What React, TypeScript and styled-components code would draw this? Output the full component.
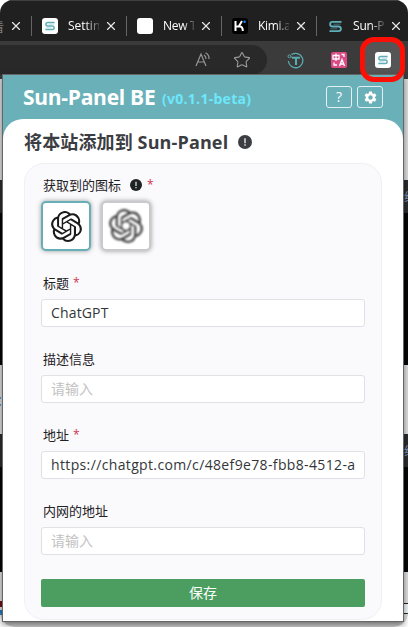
import React from "react";
import styled, { createGlobalStyle } from "styled-components";
import { Star, X } from "lucide-react";
import { MdSettings } from "react-icons/md";
import { SiOpenai } from "react-icons/si";

const Global = createGlobalStyle`
  *, *::before, *::after { box-sizing: border-box; }
  body { margin: 0; background: #fff; overflow: hidden; }
  button, input { font: inherit; margin: 0; }
`;

const cjk = `"Noto Sans CJK SC", sans-serif`;

const Browser = styled.div`
  position: relative;
  width: 408px;
  height: 627px;
  overflow: hidden;
  background: #fff;
  font-family: "Open Sans", ${cjk};
`;

const Frame = styled.div`
  display: flex;
  flex-direction: column;
  height: 627px;
  border-radius: 13px 13px 15px 15px;
  overflow: hidden;
  background: #cfcfcf;
`;

const TabBar = styled.div`
  display: flex;
  flex: none;
  height: 41px;
  padding-top: 9px;
  background: #202020;
  border-top: 1px solid #3c4043;
`;

const Tab = styled.div<{ $width: number }>`
  display: flex;
  align-items: center;
  flex: none;
  width: ${(p) => p.$width}px;
  height: 32px;
  color: #fff;
`;

const Favicon = styled.span<{ $bg?: string }>`
  display: flex;
  align-items: center;
  justify-content: center;
  flex: none;
  width: 16px;
  height: 16px;
  margin-left: 10px;
  border-radius: 3px;
  background: ${(p) => p.$bg ?? "transparent"};
`;

const TabTitle = styled.span<{ $fade?: number; $spacing?: number }>`
  flex: none;
  width: 31px;
  margin-left: 10px;
  white-space: nowrap;
  font-size: 12px;
  line-height: 18px;
  letter-spacing: ${(p) => p.$spacing ?? 0}px;
  mask-image: linear-gradient(to right, #000 ${(p) => p.$fade ?? 55}%, rgba(0, 0, 0, 0.2));
`;

const CloseIcon = styled(X).attrs({ size: 14, strokeWidth: 2 })`
  flex: none;
  margin-left: 5px;
  color: #e8e8e8;
`;

const Divider = styled.span`
  flex: none;
  width: 1px;
  height: 20px;
  margin-left: auto;
  background: #666;
`;

const PartialTitle = styled.span`
  display: flex;
  justify-content: flex-end;
  flex: none;
  width: 4px;
  color: #808080;
  font: 12px ${cjk};
`;

const Toolbar = styled.div`
  display: flex;
  flex: none;
  height: 38px;
  padding-top: 4px;
  background: #3b3b3b;
`;

const AddressBar = styled.div`
  display: flex;
  align-items: center;
  justify-content: flex-end;
  gap: 21px;
  width: 267px;
  height: 30px;
  padding-right: 16px;
  border-radius: 0 15px 15px 0;
  background: #292929;
  color: #999;
`;

const Extensions = styled.div`
  display: flex;
  align-items: center;
  height: 30px;
  padding-left: 20px;
  gap: 27px;
`;

const Translate = styled.span`
  display: flex;
  width: 16px;
  height: 16px;
  border-radius: 2px;
  background: #dc4b86;
`;

const ActiveExtension = styled.span`
  display: flex;
  align-items: center;
  justify-content: center;
  width: 16px;
  height: 16px;
  margin-left: 1px;
  border-radius: 3px;
  background: #fff;
  box-shadow: 0 0 0 11px #555;
`;

const Strip = styled.div<{ $height: number; $color: string }>`
  flex: none;
  display: flex;
  justify-content: space-between;
  height: ${(p) => p.$height}px;
  background: ${(p) => p.$color};
`;

const StripText = styled.span`
  width: 4px;
  margin-left: auto;
  color: #8095b5;
  font: 12px/33px ${cjk};
`;

const LinkMarks = styled.span`
  width: 1px;
  height: 9px;
  margin-top: 32px;
  border: solid #4a9be8;
  border-width: 2px 0;
`;

const StripBox = styled.span`
  width: 20px;
  height: 11px;
  margin: 31px 0 0 auto;
  border: 1px solid #222;
  border-right: 0;
  background: #eef6f7;
`;

const EdgeMark = styled.span`
  width: 2px;
  height: 14px;
  margin-top: 29px;
  border-top: 6px solid #701019;
  border-bottom: 5px solid #2676b9;
`;

const Highlight = styled.div`
  position: absolute;
  left: 360px;
  top: 37px;
  width: 45px;
  height: 45px;
  border: 5px solid #fc1005;
  border-radius: 14px;
`;

const Popup = styled.main`
  position: absolute;
  left: 2px;
  top: 74px;
  width: 402px;
  height: 548px;
  border: 1px solid #666;
  background: #6ab0b8;
  box-shadow: 0 3px 6px rgba(0, 0, 0, 0.45);
`;

const Header = styled.header`
  display: flex;
  align-items: center;
  height: 44px;
  padding: 0 20px;
`;

const Brand = styled.h1`
  margin: 0;
  color: #fff;
  font-size: 21px;
  line-height: 30px;
  font-weight: 700;
  width: 139px;
  letter-spacing: -0.28px;
  white-space: nowrap;
`;

const Version = styled.span`
  padding-top: 4px;
  color: #6ee7fb;
  font-size: 14px;
  line-height: 18px;
  font-weight: 700;
  letter-spacing: 0.28px;
  white-space: nowrap;
`;

const Actions = styled.div`
  display: flex;
  gap: 5px;
  margin-left: auto;
`;

const HeaderButton = styled.button`
  display: flex;
  align-items: center;
  justify-content: center;
  width: 26px;
  height: 22px;
  padding: 0;
  border: 1px solid #e2f0f1;
  border-radius: 3px;
  background: transparent;
  color: #fff;
  font-size: 14px;
  line-height: 20px;
`;

const Body = styled.div`
  height: 502px;
  padding: 8px 21px 0;
  border-radius: 20px 20px 0 0;
  background: #fff;
`;

const PageTitle = styled.h2`
  display: flex;
  align-items: center;
  gap: 10px;
  height: 29px;
  margin: 0 0 7px;
  color: #3c3d42;
  font-size: 18px;
  line-height: 26px;
  font-weight: 700;
  white-space: nowrap;
`;

const TitleText = styled.span`
  letter-spacing: 0.13px;
`;

const Card = styled.section`
  height: 457px;
  padding: 10px 17px 0 16px;
  border: 1px solid #efeff5;
  border-radius: 20px;
  background: #fafafc;
`;

const Label = styled.div`
  display: flex;
  align-items: center;
  height: 22px;
  padding-left: 2px;
  color: #1f2225;
  font-size: 13px;
  line-height: 22px;
`;

const Required = styled.span`
  margin-left: 4px;
  color: #d03050;
  font-size: 12px;
`;

const NoteIcon = styled.span`
  display: flex;
  margin: 0 1px 0 9px;
`;

const IconChoices = styled.div`
  display: flex;
  gap: 10px;
  height: 50px;
  margin: 5px 0 21px;
`;

const IconChoice = styled.button<{ $selected?: boolean }>`
  display: flex;
  align-items: center;
  justify-content: center;
  width: 50px;
  height: 50px;
  padding: 0;
  border: 2px solid ${(p) => (p.$selected ? "#67afb7" : "#c9cacc")};
  border-radius: 5px;
  background: #fff;
  color: ${(p) => (p.$selected ? "#1b1b1b" : "#3f3f3f")};
  box-shadow: 0 0 5px rgba(0, 0, 0, 0.38);

  svg {
    filter: ${(p) => (p.$selected ? "none" : "blur(0.8px)")};
  }
`;

const Field = styled.label`
  display: block;
  height: 76px;
`;

const Input = styled.input<{ $spacing: number }>`
  display: block;
  width: 324px;
  height: 28px;
  margin-top: 5px;
  padding: 0 9px 2px;
  border: 1px solid #e0e0e6;
  border-radius: 3px;
  outline: none;
  background: #fff;
  color: #333639;
  font-family: "Open Sans", ${cjk};
  font-size: 14px;
  letter-spacing: ${(p) => p.$spacing}px;

  &::placeholder {
    color: #c2c2c2;
    opacity: 1;
  }
`;

const SaveButton = styled.button`
  display: block;
  width: 324px;
  height: 28px;
  margin-top: 3px;
  padding: 0 0 1px;
  border: 0;
  border-radius: 2px;
  background: #4b9e5f;
  color: #fff;
  font-size: 14px;
  line-height: 27px;
`;

function PanelLogo({ size = 12 }: { size?: number }) {
  return (
    <svg width={size} height={size} viewBox="0 0 14 14" fill="none" stroke="#60aeb8" strokeWidth="2">
      <path d="M13.5 2H4Q1.2 2 1.2 4.5T4 7H10Q12.8 7 12.8 9.5T10 12H.5" />
      <path d="M12.5 4.5H5M1.5 9.5H9" strokeWidth=".6" />
    </svg>
  );
}

function Notice({ size, color }: { size: number; color: string }) {
  return (
    <svg width={size} height={size} viewBox="0 0 14 14">
      <circle cx="7" cy="7" r="7" fill={color} />
      <path d="M7 3.2V8.2M7 9.3V10.8" stroke="#ddd" strokeWidth="1.5" />
    </svg>
  );
}

function ReadAloud() {
  return (
    <svg width="17" height="16" viewBox="0 0 17 16" fill="none" stroke="#969696" strokeWidth="1.2">
      <path d="M1 14L6 2L11 14M3 10H9" />
      <path d="M9 3Q11 4.5 11 7M10.5 .8Q14.5 3 14 7" />
    </svg>
  );
}

function TimeIcon() {
  return (
    <svg width="17" height="17" viewBox="0 0 17 17" fill="none" stroke="#5aabb0">
      <path d="M4.5 2.6A7.2 7.2 0 1 1 1.4 9" strokeWidth="1.3" />
      <path d="M5 5.8H13M9 5.5V13" strokeWidth="2.1" />
      <circle cx="2.4" cy="4.3" r="1.4" strokeWidth="1" />
      <path d="M3.8 4.5L6 6" />
    </svg>
  );
}

function TranslateIcon() {
  return (
    <svg width="16" height="16" viewBox="0 0 16 16" fill="none" stroke="#fff" strokeWidth="1.3">
      <path d="M2 3.5H8V7H2ZM5 1.5V9M8.5 14L11 7.5L13.5 14M9.5 12H12.5M10.5 2.5H13V5M3 10.5V13H6" />
    </svg>
  );
}

function KimiIcon() {
  return (
    <svg width="16" height="16" viewBox="0 0 16 16" fill="none" stroke="#fff" strokeWidth="2">
      <path d="M3.5 3V13M4 8.5H8Q10.8 8.5 10.8 13M10 3L7 8" />
      <circle cx="12.6" cy="3.7" r="1.2" fill="#1688ff" stroke="none" />
    </svg>
  );
}

type FieldProps = { label: string; required?: boolean; value?: string; spacing?: number };

function FormField({ label, required, value, spacing = 0 }: FieldProps) {
  return (
    <Field>
      <Label>
        {label}
        {required && <Required>*</Required>}
      </Label>
      <Input $spacing={spacing} defaultValue={value} placeholder="请输入" spellCheck={false} />
    </Field>
  );
}

export default function App() {
  return (
    <Browser>
      <Global />
      <Frame>
        <TabBar>
          <Tab $width={32}>
            <PartialTitle>看</PartialTitle>
            <CloseIcon />
            <Divider />
          </Tab>
          <Tab $width={95}>
            <Favicon $bg="#fff"><PanelLogo size={10} /></Favicon>
            <TabTitle>Settin</TabTitle>
            <CloseIcon />
            <Divider />
          </Tab>
          <Tab $width={95}>
            <Favicon $bg="#fff" />
            <TabTitle $fade={65} $spacing={-0.3}>New T</TabTitle>
            <CloseIcon />
            <Divider />
          </Tab>
          <Tab $width={95}>
            <Favicon $bg="#000"><KimiIcon /></Favicon>
            <TabTitle $spacing={-0.3}>Kimi.a</TabTitle>
            <CloseIcon />
            <Divider />
          </Tab>
          <Tab $width={91}>
            <Favicon><PanelLogo size={13} /></Favicon>
            <TabTitle $spacing={-0.2}>Sun-P</TabTitle>
            <CloseIcon />
          </Tab>
        </TabBar>
        <Toolbar>
          <AddressBar>
            <ReadAloud />
            <Star size={18} strokeWidth={1.5} />
          </AddressBar>
          <Extensions>
            <TimeIcon />
            <Translate><TranslateIcon /></Translate>
            <ActiveExtension><PanelLogo size={10} /></ActiveExtension>
          </Extensions>
        </Toolbar>
        <Strip $height={101} $color="#dddddd" />
        <Strip $height={33} $color="#2b2c2d"><StripText>络</StripText></Strip>
        <Strip $height={152} $color="#050607" />
        <Strip $height={69} $color="#dedede"><LinkMarks /></Strip>
        <Strip $height={33} $color="#2b2c2d"><StripText>络</StripText></Strip>
        <Strip $height={105} $color="#050607" />
        <Strip $height={50} $color="#dedede"><EdgeMark /><StripBox /></Strip>
      </Frame>
      <Popup>
        <Header>
          <Brand>Sun-Panel BE</Brand>
          <Version>(v0.1.1-beta)</Version>
          <Actions>
            <HeaderButton aria-label="Help">?</HeaderButton>
            <HeaderButton aria-label="Settings"><MdSettings size={15} /></HeaderButton>
          </Actions>
        </Header>
        <Body>
          <PageTitle>
            <TitleText>将本站添加到 Sun-Panel</TitleText>
            <Notice size={14} color="#3c3d42" />
          </PageTitle>
          <Card>
            <Label>
              获取到的图标
              <NoteIcon><Notice size={12} color="#1f2225" /></NoteIcon>
              <Required>*</Required>
            </Label>
            <IconChoices>
              <IconChoice $selected aria-label="ChatGPT"><SiOpenai size={31} /></IconChoice>
              <IconChoice aria-label="ChatGPT"><SiOpenai size={34} /></IconChoice>
            </IconChoices>
            <FormField label="标题" required value="ChatGPT" spacing={0.15} />
            <FormField label="描述信息" />
            <FormField label="地址" required value="https://chatgpt.com/c/48ef9e78-fbb8-4512-a" spacing={0.36} />
            <FormField label="内网的地址" />
            <SaveButton>保存</SaveButton>
          </Card>
        </Body>
      </Popup>
      <Highlight />
    </Browser>
  );
}
